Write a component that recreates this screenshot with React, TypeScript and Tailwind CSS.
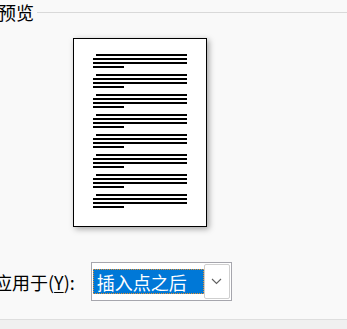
import React from "react";

const paragraphs = Array.from({ length: 8 });

function PreviewPage() {
  return (
    <div className="ml-[73px] mt-[14px] flex h-[189px] w-[134px] flex-col gap-[6px] border border-black bg-white px-[19px] pt-[15px] shadow-[2px_2px_6px_rgba(0,0,0,0.35)]">
      {paragraphs.map((_, i) => (
        <div key={i} className="flex flex-col gap-[2px]">
          <div className="ml-[3px] h-[2px] bg-black" />
          <div className="h-[2px] bg-black" />
          <div className="h-[2px] bg-black" />
          <div className="h-[2px] w-[31px] bg-black" />
        </div>
      ))}
    </div>
  );
}

function ApplyToSelect() {
  return (
    <div className="ml-[16px] flex h-[39px] w-[141px] items-center border border-[#a6a6ad] bg-white px-[1px]">
      <div className="flex h-[25px] w-[111px] items-center border border-dotted border-[#e8912d] bg-[#0078d7] pl-[3px] text-[18px] leading-none text-white">
        插入点之后
      </div>
      <div className="flex h-[35px] w-[26px] items-center justify-center rounded-[2px] border border-[#cfcfcf] bg-white">
        <svg width="11" height="7" viewBox="0 0 11 7" fill="none">
          <path d="M1 1l4.5 4.5L10 1" stroke="#606060" strokeWidth="1.1" />
        </svg>
      </div>
    </div>
  );
}

export default function App() {
  return (
    <div
      className="relative flex h-[329px] w-[347px] flex-col overflow-hidden bg-[#f9f9f9] text-black"
      style={{ fontFamily: '"Noto Sans CJK SC", "Noto Sans", sans-serif' }}
    >
      <div className="flex h-6 items-center">
        <span className="ml-[-2px] text-[18px] leading-none">预览</span>
        <div className="ml-[3px] h-px flex-1 bg-[#d9d9d9]" />
      </div>

      <PreviewPage />

      <div className="mt-[35px] flex items-center">
        <span className="ml-[-6px] text-[18px] leading-none">
          应用于(<span className="underline underline-offset-2">Y</span>):
        </span>
        <ApplyToSelect />
      </div>

      <div className="mt-auto h-[10px] border-t border-[#dedede] bg-[#f0f0f0]" />
    </div>
  );
}
